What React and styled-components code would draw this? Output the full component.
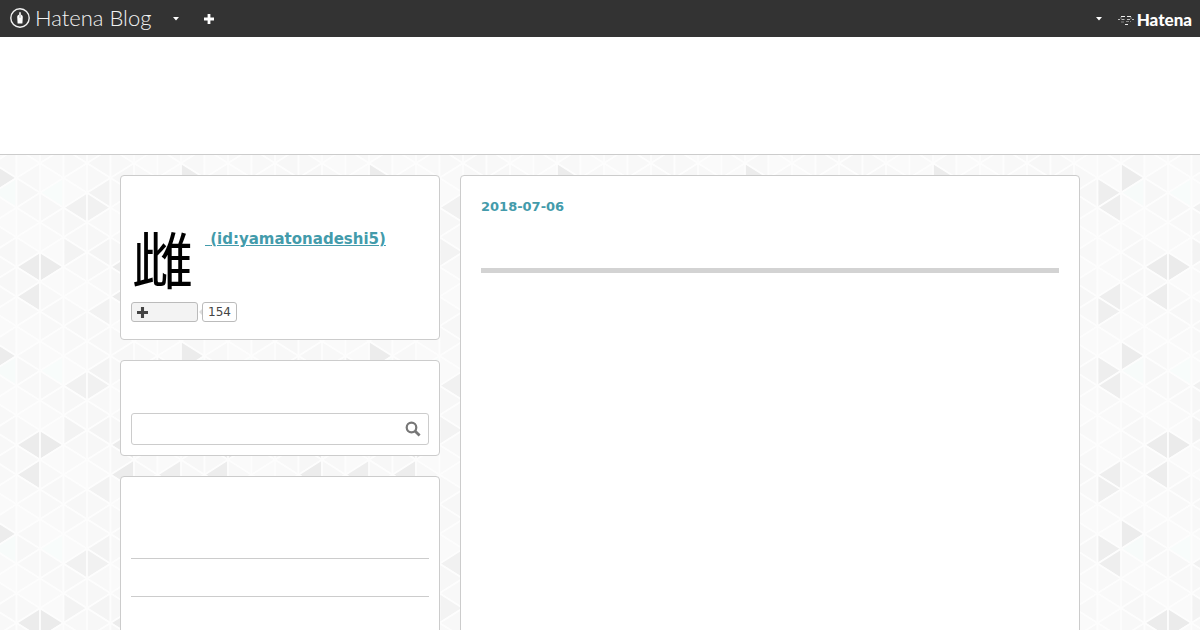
import React, { useState } from "react";
import styled, { createGlobalStyle } from "styled-components";

// triangle tile: 8 columns by 12 half steps
const COLS = 8;
const ROWS = 12;
const TILE_W = 188;
const TILE_H = 178;

const shades = {
  "1,0": "#ececec",
  "2,0": "#ebebeb",
  "5,0": "#ececec",
  "1,2": "#ededed",
  "5,2": "#ececec",
  "7,2": "#eeeeee",
  "7,3": "#efefef",
  "4,3": "#f2f2f2",
  "0,6": "#ececec",
  "7,7": "#eeeeee",
  "4,7": "#f3f3f3",
  "0,7": "#f7fbfa",
  "2,7": "#f8fcfb",
  "7,8": "#eeeeee",
  "3,8": "#f1f1f1",
  "4,8": "#f1f1f1",
  "3,11": "#f3f3f3",
  "4,11": "#f4f4f4",
};

const plain = ["#f8f8f8", "#f9f9f9", "#f7f7f7", "#fafafa", "#f8f8f8"];

const makeTile = () => {
  const w = TILE_W / COLS;
  const h = TILE_H / ROWS;
  let shapes = "";
  for (let c = 0; c < COLS; c++) {
    for (let k = 0; k <= ROWS; k++) {
      const fill = shades[`${c},${k % ROWS}`] || plain[(c * 3 + (k % ROWS) * 2) % 5];
      const tipLeft = (k + c) % 2 === 1;
      const tip = tipLeft ? c * w : (c + 1) * w;
      const base = tipLeft ? (c + 1) * w : c * w;
      const y = k * h;
      shapes += `<path d="M${tip} ${y}L${base} ${y - h}V${y + h}Z" fill="${fill}"/>`;
    }
  }
  const svg = `<svg xmlns="http://www.w3.org/2000/svg" width="${TILE_W}" height="${TILE_H}"><g stroke="#fdfdfd" stroke-width="1.8">${shapes}</g></svg>`;
  return `url("data:image/svg+xml,${encodeURIComponent(svg)}")`;
};

const GlobalStyle = createGlobalStyle`
  * {
    box-sizing: border-box;
  }
  body {
    margin: 0;
    color: #3d3f44;
    font-family: "DejaVu Sans", sans-serif;
    background-color: #fdfdfd;
    background-image: ${makeTile()};
    background-position: -7px 89px;
  }
`;

const TopBar = styled.nav`
  display: flex;
  align-items: center;
  justify-content: space-between;
  height: 37px;
  padding: 0 8px 0 10px;
  background: #333;
`;

const BarGroup = styled.div`
  display: flex;
  align-items: center;
  gap: ${props => props.$gap}px;
`;

const BlogLogo = styled.a`
  display: flex;
  align-items: center;
  gap: 5px;
  padding-bottom: 1px;
  color: #f2f2f2;
  font-family: Lato, sans-serif;
  font-size: 22px;
  font-weight: 300;
  line-height: 34px;
  text-decoration: none;
`;

const HatenaLogo = styled.a`
  display: flex;
  align-items: center;
  gap: 3px;
  padding-top: 3px;
  color: #fff;
  font-family: Lato, sans-serif;
  font-size: 17px;
  font-weight: 900;
  line-height: 34px;
  text-decoration: none;
`;

const BarButton = styled.button`
  display: flex;
  align-items: center;
  justify-content: center;
  width: 12px;
  height: 36px;
  padding: 0;
  border: 0;
  background: none;
  color: #fff;
`;

const BlogHeader = styled.header`
  height: 118px;
  border-bottom: 1px solid #ccc;
  background: #fff;
`;

const Content = styled.div`
  display: flex;
  align-items: stretch;
  gap: 20px;
  max-width: 960px;
  margin: 0 auto;
  padding: 20px 0;
`;

const Sidebar = styled.aside`
  display: flex;
  flex: 0 0 320px;
  flex-direction: column;
  gap: 20px;
`;

const Card = styled.section`
  padding: ${props => props.$top}px 10px ${props => props.$bottom}px;
  border: 1px solid #ccc;
  border-radius: 4px;
  background: #fff;
`;

const Main = styled.main`
  flex: 1;
  min-width: 0;
  padding: 20px;
  border: 1px solid #ccc;
  border-radius: 4px;
  background: #fff;
`;

const Profile = styled.div`
  display: flex;
  align-items: flex-start;
  gap: 12px;
`;

const Avatar = styled.a`
  width: 62px;
  height: 62px;
  color: #000;
  font-family: "Noto Sans CJK JP", sans-serif;
  font-size: 61px;
  font-weight: 400;
  line-height: 58px;
  text-align: right;
  text-decoration: none;
`;

const ProfileLink = styled.a`
  color: #439bab;
  font-size: 15px;
  font-weight: bold;
  line-height: 20px;
`;

const Follow = styled.div`
  display: flex;
  gap: 4px;
  margin-top: 11px;
`;

const FollowButton = styled.button`
  display: flex;
  align-items: center;
  width: 67px;
  height: 20px;
  padding: 0 5px;
  border: 1px solid #bbb;
  border-radius: 3px;
  background: #f3f3f3;
  color: #444;
`;

const Count = styled.a`
  position: relative;
  height: 20px;
  padding: 0 5px;
  border: 1px solid #bbb;
  border-radius: 3px;
  background: #fff;
  color: #444;
  font-size: 12px;
  line-height: 18px;
  text-decoration: none;

  &::before {
    content: "";
    position: absolute;
    top: 6px;
    left: -4px;
    border: 3px solid transparent;
    border-right-color: #ddd;
    border-left: 0;
  }
`;

const SearchForm = styled.form`
  display: flex;
  align-items: center;
  height: 32px;
  padding-right: 7px;
  border: 1px solid #ccc;
  border-radius: 3px;
`;

const SearchInput = styled.input`
  flex: 1;
  min-width: 0;
  height: 30px;
  padding: 5px;
  border: 0;
  outline: 0;
  background: none;
  font-size: 13px;
`;

const SearchButton = styled.button`
  display: flex;
  padding: 0;
  border: 0;
  background: none;
  color: #777;
`;

const EntryList = styled.ul`
  margin: 0;
  padding: 0;
  list-style: none;
`;

const EntryItem = styled.li`
  height: 38px;
  border-bottom: 1px solid #ccc;
`;

const EntryDate = styled.a`
  display: block;
  color: #439bab;
  font-size: 13px;
  font-weight: bold;
  line-height: 22px;
  text-decoration: none;
`;

const EntryBody = styled.article`
  min-height: 400px;
  margin-top: 50px;
  border-top: 5px solid #d3d3d3;
`;

const PenIcon = () => (
  <svg width="20" height="20" viewBox="0 0 20 20" aria-hidden="true">
    <circle cx="10" cy="10" r="9.2" fill="none" stroke="#f2f2f2" strokeWidth="1.4" />
    <path
      d="M9.2 4.2h1.6v2.2c1.4.6 2 1.5 2 2.6l-.4 6.6H7.6L7.2 9c0-1.1.6-2 2-2.6z"
      fill="#fff"
    />
    <path d="M10 6.8v3" stroke="#777" strokeWidth=".7" />
  </svg>
);

const Caret = () => (
  <svg width="6" height="4" viewBox="0 0 6 4" aria-hidden="true">
    <path d="M0 0h6L3 3.5z" fill="currentColor" />
  </svg>
);

const Plus = ({ size }) => (
  <svg width={size} height={size} viewBox="0 0 10 10" aria-hidden="true">
    <path d="M5 0v10M0 5h10" stroke="currentColor" strokeWidth="2.8" />
  </svg>
);

const FlagIcon = () => (
  <svg width="16" height="11" viewBox="0 0 16 11" aria-hidden="true">
    <g fill="none" stroke="#eee" strokeWidth="1">
      <path d="M3 1.5h4M9 1.5h4M7 9.5h3" />
      <path d="M0 4.5h2M3.5 4.500h3M9 4.500h3M14 4.500h2" stroke="#bbb" />
      <path d="M2 3h2M12 3h2M3 7h3M8 6.500h3M12 6.500h1" stroke="#888" />
    </g>
  </svg>
);

const SearchIcon = () => (
  <svg width="16" height="16" viewBox="0 0 16 16" aria-hidden="true">
    <circle cx="6.5" cy="6.5" r="4.8" fill="none" stroke="currentColor" strokeWidth="2.2" />
    <path d="M10 10l4.6 4.6" stroke="currentColor" strokeWidth="2.8" />
  </svg>
);

const App = () => {
  const [query, setQuery] = useState("");

  return (
    <>
      <GlobalStyle />
      <TopBar>
        <BarGroup $gap={19}>
          <BlogLogo href="#blog">
            <PenIcon />
            Hatena Blog
          </BlogLogo>
          <BarGroup $gap={21}>
            <BarButton type="button" aria-label="Menu"><Caret /></BarButton>
            <BarButton type="button" aria-label="Subscribe"><Plus size={10} /></BarButton>
          </BarGroup>
        </BarGroup>
        <BarGroup $gap={13}>
          <BarButton type="button" aria-label="Account"><Caret /></BarButton>
          <HatenaLogo href="#hatena">
            <FlagIcon />
            Hatena
          </HatenaLogo>
        </BarGroup>
      </TopBar>
      <BlogHeader />
      <Content>
        <Sidebar>
          <Card $top={53} $bottom={17}>
            <Profile>
              <Avatar href="#about">雌</Avatar>
              <ProfileLink href="#about">{"\u00a0"}(id:yamatonadeshi5)</ProfileLink>
            </Profile>
            <Follow>
              <FollowButton type="button" aria-label="Follow"><Plus size={11} /></FollowButton>
              <Count href="#subscribers">154</Count>
            </Follow>
          </Card>
          <Card $top={52} $bottom={10}>
            <SearchForm role="search" onSubmit={e => e.preventDefault()}>
              <SearchInput
                type="text"
                name="q"
                aria-label="Search"
                value={query}
                onChange={e => setQuery(e.target.value)}
              />
              <SearchButton type="submit" aria-label="Search"><SearchIcon /></SearchButton>
            </SearchForm>
          </Card>
          <Card $top={44} $bottom={10}>
            <EntryList>
              <EntryItem />
              <EntryItem />
              <EntryItem />
            </EntryList>
          </Card>
        </Sidebar>
        <Main>
          <EntryDate href="#2018-07-06">
            <time dateTime="2018-07-06">2018-07-06</time>
          </EntryDate>
          <EntryBody />
        </Main>
      </Content>
    </>
  );
};

export default App;
